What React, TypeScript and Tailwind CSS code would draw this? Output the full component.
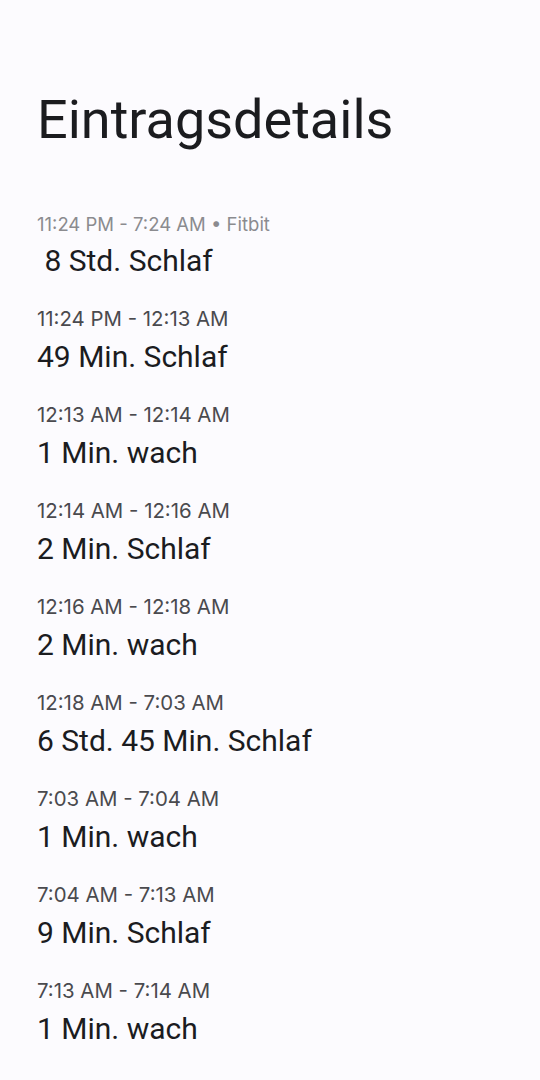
import React from 'react';

type Entry = { time: string; value: string; source?: string };

const entries: Entry[] = [
    { time: '11:24 PM - 7:24 AM', source: 'Fitbit', value: ' 8 Std. Schlaf' },
    { time: '11:24 PM - 12:13 AM', value: '49 Min. Schlaf' },
    { time: '12:13 AM - 12:14 AM', value: '1 Min. wach' },
    { time: '12:14 AM - 12:16 AM', value: '2 Min. Schlaf' },
    { time: '12:16 AM - 12:18 AM', value: '2 Min. wach' },
    { time: '12:18 AM - 7:03 AM', value: '6 Std. 45 Min. Schlaf' },
    { time: '7:03 AM - 7:04 AM', value: '1 Min. wach' },
    { time: '7:04 AM - 7:13 AM', value: '9 Min. Schlaf' },
    { time: '7:13 AM - 7:14 AM', value: '1 Min. wach' },
];

export default function App() {
    return (
        <div className="min-h-[1080px] w-[540px] bg-[#fcfbfe] px-[37px] pt-[79px] font-['Roboto',sans-serif] overflow-hidden">
            <h1 className="text-[54px] leading-normal text-[#1b1c1f]">Eintragsdetails</h1>

            <div className="mt-[48px] flex flex-col gap-[26px]">
                {entries.map((e, i) => (
                    <div key={i} className="flex flex-col">
                        {e.source ? (
                            <p className="mt-[4px] mb-[7px] text-[18.5px] leading-[24px] text-[#8b8b8f] font-['Inter',sans-serif]">
                                {e.time} • {e.source}
                            </p>
                        ) : (
                            <p className="mt-[2px] mb-[8px] text-[20.4px] leading-[24px] text-[#4a4a4e] font-['Inter',sans-serif]">
                                {e.time}
                            </p>
                        )}
                        <p className="text-[30px] leading-[36px] text-[#1b1c1f] whitespace-pre">{e.value}</p>
                    </div>
                ))}
            </div>
        </div>
    );
}
